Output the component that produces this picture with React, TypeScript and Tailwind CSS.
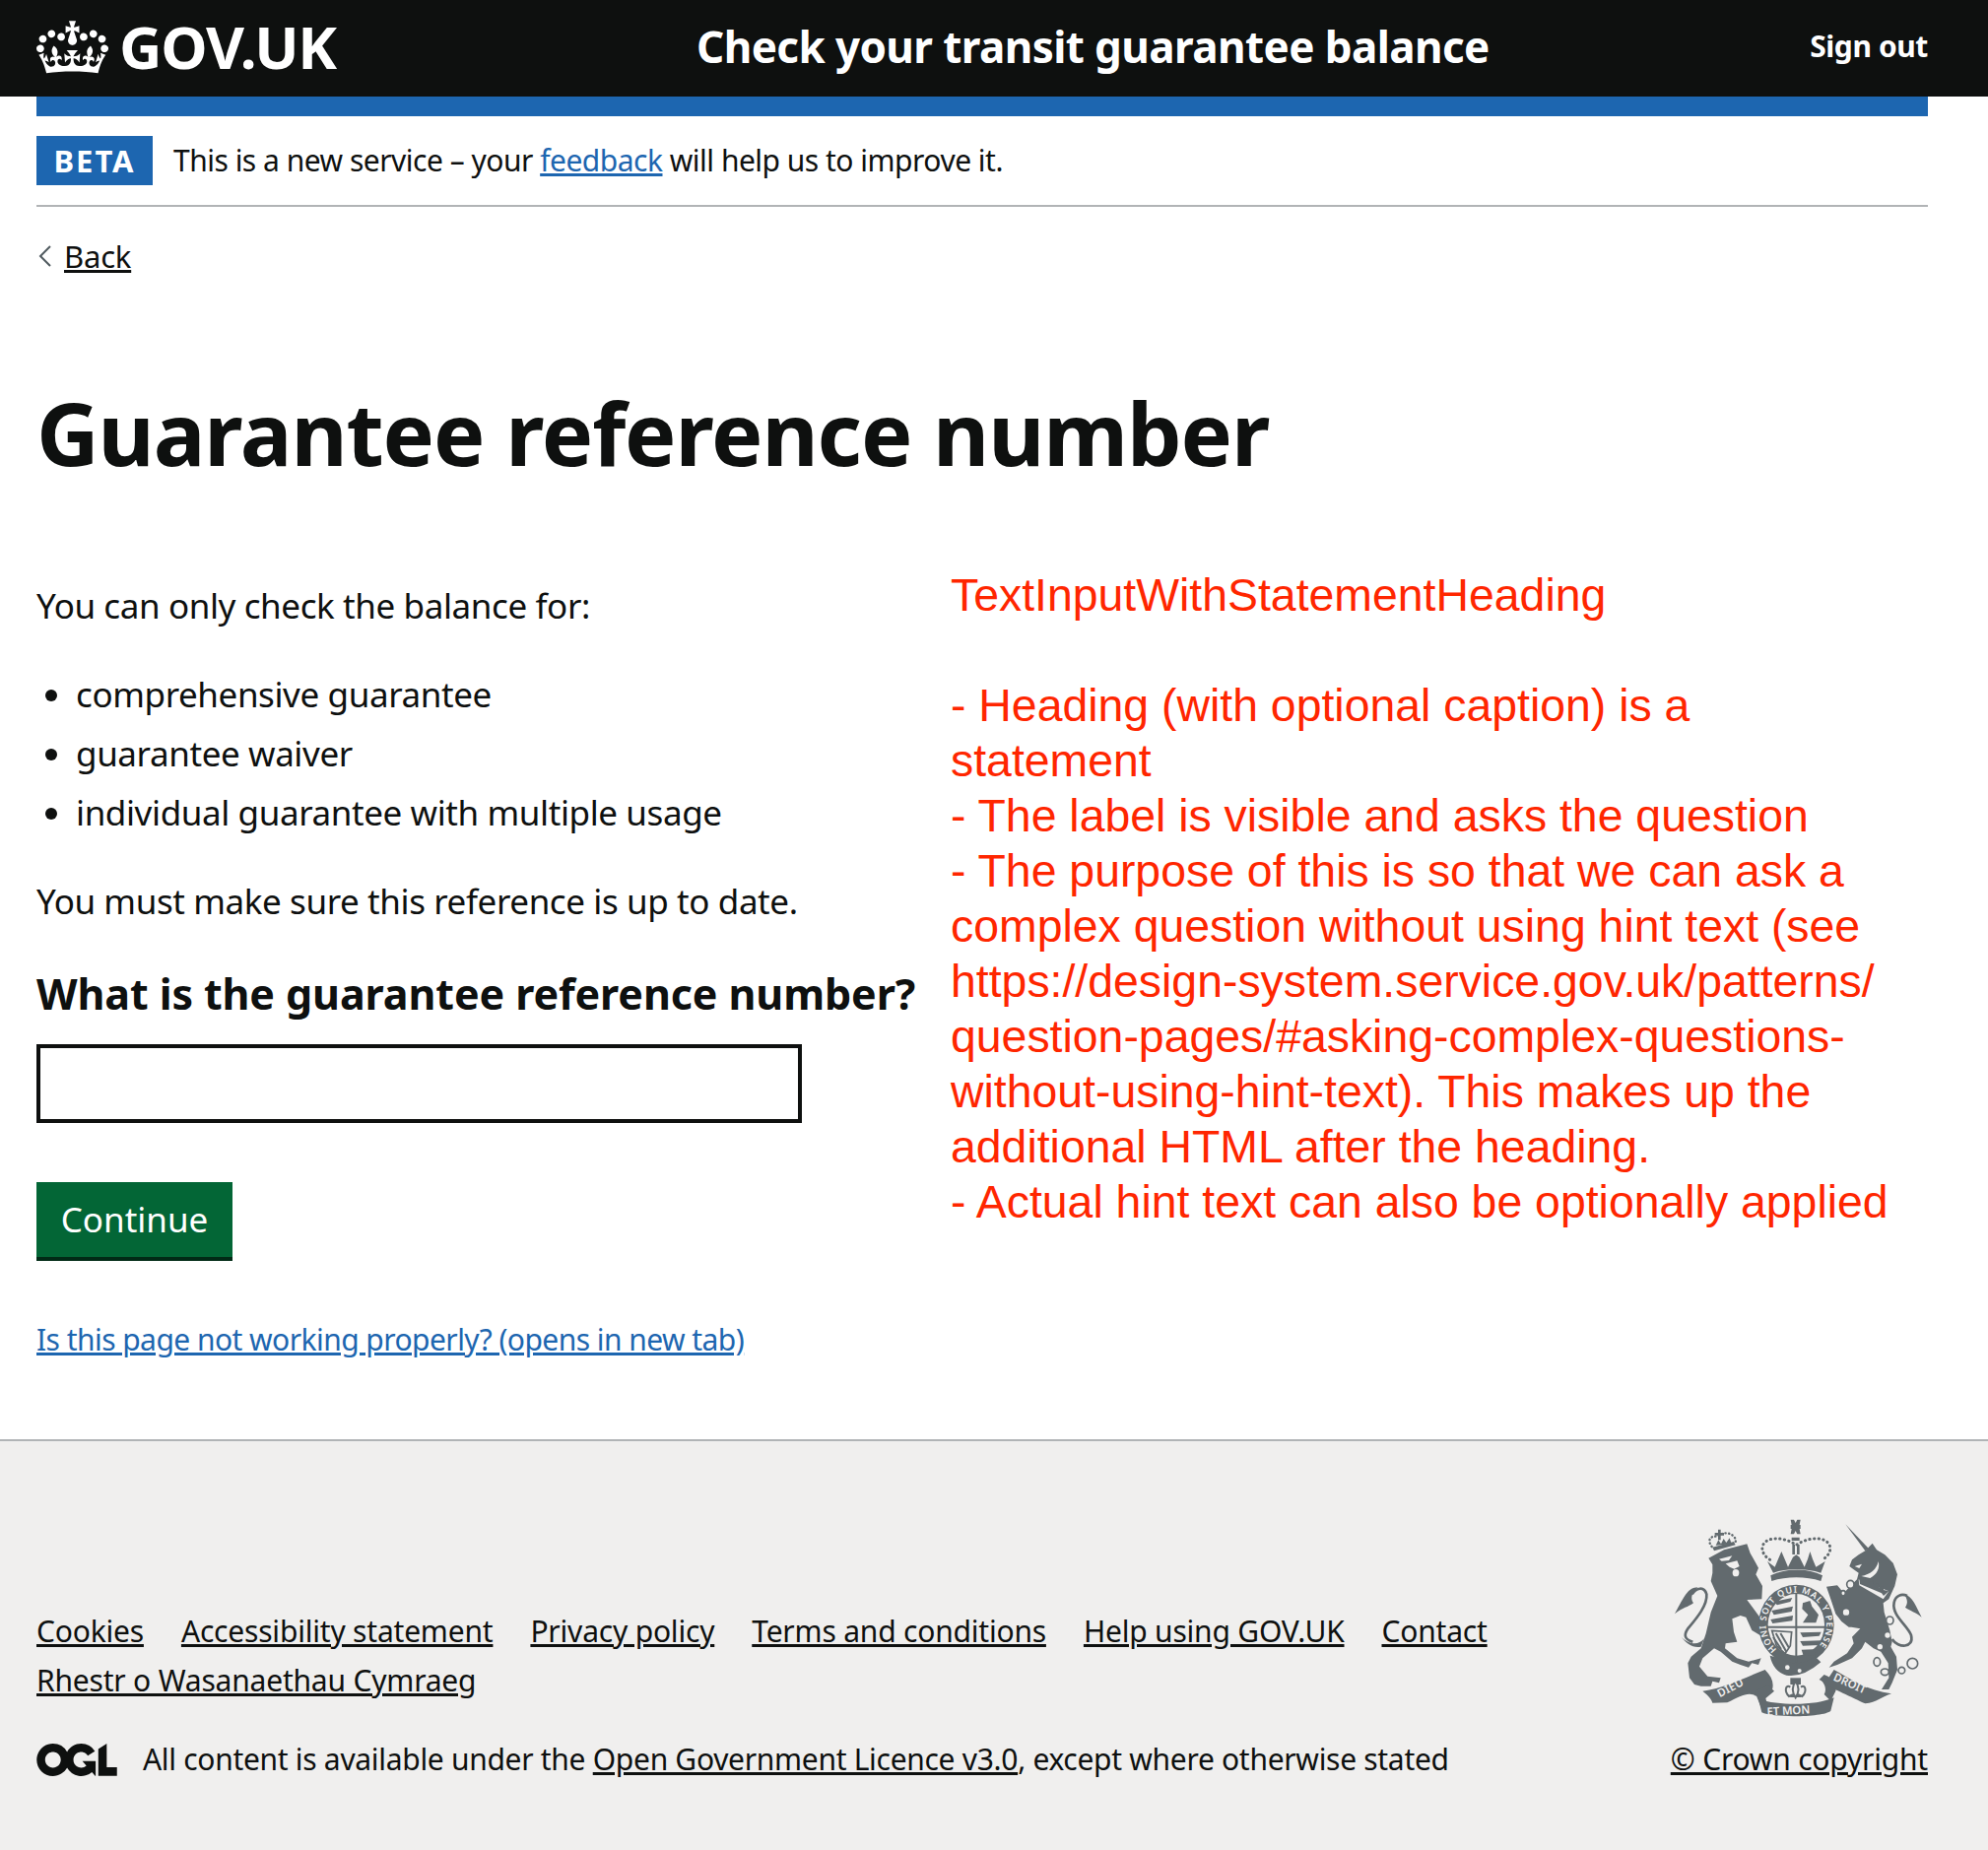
const CROWN =
  "M25 30.2c3.5 1.5 7.7-.2 9.1-3.7 1.5-3.6-.2-7.8-3.9-9.2-3.6-1.4-7.6.3-9.1 3.9-1.4 3.5.3 7.5 3.9 9zM9 39.5c3.6 1.5 7.8-.2 9.2-3.7 1.5-3.6-.2-7.8-3.9-9.1-3.6-1.5-7.6.2-9.1 3.8-1.4 3.5.3 7.5 3.8 9zM4.4 57.2c3.5 1.5 7.7-.2 9.1-3.8 1.5-3.6-.2-7.7-3.9-9.1-3.5-1.5-7.6.3-9.1 3.8-1.4 3.5.3 7.6 3.9 9.1zm38.3-21.4c3.5 1.5 7.7-.2 9.1-3.8 1.5-3.6-.2-7.7-3.9-9.1-3.6-1.5-7.6.3-9.1 3.8-1.3 3.6.4 7.7 3.9 9.1zm64.4-5.6c-3.6 1.5-7.8-.2-9.1-3.7-1.5-3.6.2-7.8 3.8-9.2 3.6-1.4 7.7.3 9.2 3.9 1.3 3.5-.4 7.5-3.9 9zm15.9 9.3c-3.6 1.5-7.7-.2-9.1-3.7-1.5-3.6.2-7.8 3.7-9.1 3.6-1.5 7.7.2 9.2 3.8 1.5 3.5-.3 7.5-3.8 9zm4.7 17.7c-3.6 1.5-7.8-.2-9.2-3.8-1.5-3.6.2-7.7 3.9-9.1 3.6-1.5 7.7.3 9.2 3.8 1.3 3.5-.4 7.6-3.9 9.1zM89.3 35.8c-3.6 1.5-7.8-.2-9.2-3.8-1.4-3.6.2-7.7 3.9-9.1 3.6-1.5 7.7.3 9.2 3.8 1.4 3.6-.3 7.7-3.9 9.1zM69.7 17.7l8.9 4.7V9.3l-8.9 2.8c-.2-.3-.5-.6-.9-.9L72.4 0H59.6l3.6 11.2c-.3.3-.6.5-.9.9l-8.8-2.8v13.1l8.8-4.7c.3.3.6.7.9.9l-5 15.4v.1c-.2.8-.4 1.6-.4 2.4 0 4.1 3.1 7.5 7 8.1h.2c.3 0 .7.1 1 .1.4 0 .7 0 1-.1h.2c4-.6 7.1-4.1 7.1-8.1 0-.8-.1-1.7-.4-2.4V34l-5.1-15.4c.4-.2.7-.6 1-.9zM66 92.8c16.9 0 32.8 1.1 47.1 3.2 4-16.9 8.9-26.7 14-33.5l-9.6-3.4c1 4.9 1.1 7.2 0 10.2-1.5-1.4-3-4.3-4.2-8.7L108.6 76c2.8-2 5-3.2 7.5-3.3-4.4 9.4-10 11.9-13.6 11.2-4.3-.8-6.3-4.6-5.6-7.9 1-4.7 5.7-5.9 8-.5 4.3-8.7-3-11.4-7.6-8.8 7.1-7.2 7.9-13.5 2.1-21.1-8 6.1-8.1 12.3-4.5 20.8-4.7-5.4-12.1-2.5-9.5 6.2 3.4-5.2 7.9-2 7.2 3.1-.6 4.3-6.4 7.8-13.5 7.2-10.3-.9-10.9-8-11.2-13.8 2.5-.5 7.1 1.8 11 7.3L80.2 60c-4.1 4.4-8 5.3-12.3 5.4 1.4-4.4 8-11.6 8-11.6H55.5s6.4 7.2 7.9 11.6c-4.2-.1-8-1-12.3-5.4l1.4 16.4c3.9-5.5 8.5-7.7 10.9-7.3-.3 5.8-.9 12.8-11.1 13.8-7.2.6-12.9-2.9-13.5-7.2-.7-5 3.8-8.3 7.1-3.1 2.7-8.7-4.6-11.6-9.4-6.2 3.7-8.5 3.6-14.7-4.6-20.8-5.8 7.6-5 13.9 2.2 21.1-4.7-2.6-11.9.1-7.7 8.8 2.3-5.5 7.1-4.2 8.1.5.7 3.3-1.3 7.1-5.7 7.9-3.5.7-9-1.8-13.5-11.2 2.5.1 4.7 1.3 7.5 3.3l-4.7-15.4c-1.2 4.4-2.7 7.2-4.3 8.7-1.1-3-.9-5.3 0-10.2l-9.5 3.4c5 6.9 9.9 16.7 14 33.5 14.8-2.1 30.8-3.2 47.7-3.2z";

const OGL =
  "M421.5 142.8V.1l-50.7 32.3v161.1h112.4v-50.7zm-122.3-9.6A47.12 47.12 0 0 1 221 97.8c0-26 21.1-47.1 47.1-47.1 16.7 0 31.4 8.7 39.7 21.8l42.7-27.2A97.63 97.63 0 0 0 268.1 0c-36.5 0-68.3 20.1-85.1 49.7A98 98 0 0 0 97.8 0C43.9 0 0 43.9 0 97.8s43.9 97.8 97.8 97.8c36.5 0 68.3-20.1 85.1-49.7a97.76 97.76 0 0 0 149.6 25.4l19.4 22.2h3v-87.8h-80l24.3 27.5zM97.8 145c-26 0-47.1-21.1-47.1-47.1s21.1-47.1 47.1-47.1 47.2 21 47.2 47S123.8 145 97.8 145";

const FOOTER_LINKS = [
  "Cookies",
  "Accessibility statement",
  "Privacy policy",
  "Terms and conditions",
  "Help using GOV.UK",
  "Contact",
  "Rhestr o Wasanaethau Cymraeg",
];

const NOTES = [
  "TextInputWithStatementHeading",
  "",
  "- Heading (with optional caption) is a statement",
  "- The label is visible and asks the question",
  "- The purpose of this is so that we can ask a complex question without using hint text (see https://design-system.service.gov.uk/patterns/ question-pages/#asking-complex-questions-without-using-hint-text). This makes up the additional HTML after the heading.",
  "- Actual hint text can also be optionally applied",
];

// Royal arms. Coordinates are 3x page pixels, three groups to match the three crops I traced
function RoyalArms() {
  const dark = "#626a6e";
  const light = "#f0efee";
  const font = "'Noto Sans',sans-serif";
  return (
    <svg viewBox="0 0 786 645" className="w-[262px] h-[215px]" fill={dark}>
      {/* lion */}
      <path d="M118 125L165 100L235 82L245 110L262 140L270 155L262 175L282 210L280 250L235 252L285 320L302 345L312 370L288 376L275 360L250 345L232 305L215 300L190 310L195 350L205 380L170 385L168 400L205 430L240 440L278 430L270 450L250 445L240 458L215 450L190 440L155 410L135 400L100 430L90 455L115 485L155 490L150 505L130 500L125 515L95 515L75 510L60 490L55 445L65 425L95 400L110 355L125 290L145 240L125 195L130 170L130 145z" />
      <path d="M150 128L190 118L180 132L158 134zM170 142L205 133L212 150L196 158L182 152z" fill={light} />
      <ellipse cx="201" cy="170" rx="10" ry="11" fill={light} />
      <path d="M70 380C40 372 45 355 55 340C80 310 115 270 112 235C105 210 80 215 68 235" fill="none" stroke={dark} strokeWidth="8" />
      <path d="M85 214C55 215 45 240 15 295C40 275 55 275 72 262C60 245 70 230 85 214z" />
      <path d="M35 365C55 385 85 395 105 370L95 395C70 400 50 385 35 365z" />
      <path d="M130 92L195 75L200 85L135 103z" />
      <path d="M128 90C112 70 125 55 145 60C160 45 185 45 197 62C205 72 198 80 195 80" fill="none" stroke={dark} strokeWidth="7" strokeLinecap="round" strokeDasharray="1 10" />
      <path d="M147 38h8v10h10v8h-10v14h-8v-14h-10v-8h10z" />
      <path d="M140 86l8-16 8 12 8-16 8 12 10-14 6 18z" />

      <g transform="translate(255 0)">
        {/* crown */}
        <path d="M50 130C25 115 15 85 45 70C70 60 105 68 130 85C155 68 190 60 215 70C245 85 235 115 210 130" fill="none" stroke={dark} strokeWidth="9" strokeLinecap="round" strokeDasharray="1 13" />
        <path d="M113 8h10l5 10 5-10h10l-3 16 3 0 0 12-3 0 3 16h-10l-5-10-5 10h-10l3-16-3 0 0-12 3 0z" />
        <path d="M116 62h24v10h-24zM118 84h8v30h-8zM132 84h8v30h-8z" />
        <path d="M42 135L65 152L75 128L85 105L95 128L105 152L120 122L130 115L140 122L155 152L165 128L172 105L180 128L190 152L218 135L205 170C160 155 100 155 60 170z" />
        <path d="M55 195L52 178C100 155 165 155 210 178L205 195C160 180 100 180 55 195z" />

        {/* garter and shield */}
        <ellipse cx="130" cy="328" rx="115" ry="122" />
        <path id="garter-arc" d="M71 403A92 98 0 1 1 189 403" fill="none" />
        <text fontFamily={font} fontWeight="600" fontSize="27" fill={light}>
          <textPath href="#garter-arc" textLength="450" lengthAdjust="spacing" startOffset="0">HONI SOIT QUI MAL Y PENSE</textPath>
        </text>
        <ellipse cx="130" cy="328" rx="86" ry="94" fill={light} />
        <path d="M127 232h6v210h-6zM42 332h176v6h-176z" />
        <path d="M60 258L118 246L112 258L72 268zM55 285L120 272L116 288L62 298zM52 312L120 300L118 316L58 324z" />
        <path d="M150 262L172 255L178 272L198 298L190 322L150 322L166 298L148 280z" />
        <path d="M142 352L206 350L200 362L150 366zM142 378L206 376L200 390L150 392zM146 404L198 402L184 420L152 422z" />
        <path d="M56 346L116 350L112 392L96 416L70 392z" fill="none" stroke={dark} strokeWidth="5" />
        <path d="M68 354L100 410M82 354L108 398M60 366L84 402" stroke={dark} strokeWidth="6" />
        <path d="M50 422L78 430Q130 462 188 425L205 442Q150 490 100 482Q60 470 50 422z" />
        <circle cx="103" cy="458" r="7" fill={light} />
        <circle cx="140" cy="468" r="6" fill={light} />

        {/* fleur de lys */}
        <path d="M112 490h32v20h-32z" />
        <path d="M128 500C114 520 118 535 128 550C138 535 142 520 128 500zM112 518C98 508 92 530 108 546L122 540M144 518C158 508 164 530 148 546L134 540M112 546H144" fill={light} stroke={dark} strokeWidth="6" />
      </g>

      {/* ribbons */}
      <path d="M100 530C170 520 225 490 290 465C310 485 318 505 312 525L262 545C240 530 215 545 175 565L130 566C125 550 112 540 100 530z" />
      <path d="M258 530L300 512L318 530L292 552L300 585L275 572z" />
      <path d="M270 555C335 575 445 575 500 550L490 590C470 610 315 612 280 595z" />
      <path d="M470 480C500 490 510 515 505 530L490 560L470 540C480 525 470 500 455 495z" />
      <path d="M500 465C545 490 605 530 675 538C645 548 630 565 595 568C555 550 495 520 470 510z" />
      <text x="152" y="550" transform="rotate(-28 152 550)" fontFamily={font} fontWeight="600" fontSize="34" fill={light} letterSpacing="1">DIEU</text>
      <text x="296" y="605" transform="rotate(-3 296 605)" fontFamily={font} fontWeight="600" fontSize="34" fill={light}>ET MON</text>
      <text x="496" y="496" transform="rotate(24 496 496)" fontFamily={font} fontWeight="600" fontSize="34" fill={light}>DROIT</text>

      <g transform="translate(405 0)">
        {/* unicorn */}
        <path d="M130 22L200 95L190 103z" />
        <path d="M190 103L212 80L225 100L250 115L275 140L288 175L280 210L262 250L245 262L248 290L265 345L272 380L268 395L285 425L288 465L272 505L262 525L240 525L262 490L260 445L238 410L215 400L190 380L180 400L150 430L105 450L80 458L95 440L135 415L155 385L150 365L175 340L148 335L140 335L118 318L100 295L85 250L72 212L105 208L125 232L140 215L165 190L170 170L155 160L142 150L150 130L170 115z" />
        <path d="M230 135C225 160 205 175 178 180L205 186C225 176 236 155 230 135zM158 150L180 143L172 156z" fill={light} />
        <path d="M170 190L262 226L245 250L172 208z" fill={light} />
        <path d="M172 190L180 180L185 192L198 186L201 198L214 194L216 206L230 202L232 214L246 210L246 222L262 226L246 240L240 232L174 204z" />
        <path d="M272 372C290 400 340 400 330 360C320 330 270 300 278 260C282 240 300 232 318 240" fill="none" stroke={dark} strokeWidth="8" />
        <path d="M308 234C335 240 345 275 362 305C345 290 325 285 312 275C322 262 318 248 308 234z" />
        <g fill={light} stroke={dark} strokeWidth="5">
          <ellipse cx="145" cy="205" rx="11" ry="12" />
          <ellipse cx="123" cy="232" rx="7" ry="8" />
          <ellipse cx="132" cy="290" rx="12" ry="12" />
          <ellipse cx="265" cy="315" rx="11" ry="12" />
        </g>
        <circle cx="258" cy="360" r="8" fill={light} />
        <circle cx="235" cy="395" r="8" fill={light} />
        <g fill="none" stroke={dark} strokeWidth="5">
          <ellipse cx="226" cy="441" rx="10" ry="13" />
          <ellipse cx="250" cy="472" rx="12" ry="10" />
          <circle cx="301" cy="467" r="10" />
          <circle cx="334" cy="446" r="16" />
        </g>
      </g>
    </svg>
  );
}

export default function App() {
  return (
    <div className="min-h-[1878px] flex flex-col bg-white text-[#0e100f] font-['Noto_Sans',sans-serif] text-[35px] tracking-[-0.4px] leading-[50px]">
      <header className="h-[98px] shrink-0 bg-[#0e100f] text-white flex items-center pl-[37px] pr-[61px]">
        <div className="w-[670px] flex items-center gap-[11px]">
          <svg viewBox="0 0 132 97" className="w-[73px] h-[54px] -mt-[2px]" fill="currentColor">
            <path fillRule="evenodd" d={CROWN} />
          </svg>
          <span className="text-[60px] font-bold tracking-[-1.2px] -mt-[5px]">GOV.UK</span>
        </div>
        <div className="text-[44px] font-bold flex-1 tracking-[-0.6px] -mt-[4px]">Check your transit guarantee balance</div>
        <a className="text-[30px] font-bold tracking-[-0.4px] -mt-[4px]">Sign out</a>
      </header>

      <main className="flex-1 px-[37px] pr-[61px]">
        <div className="h-[20px] bg-[#1d66b0]" />
        <div className="h-[92px] border-b-2 border-[#b1b4b6] flex items-center gap-[21px]">
          <span className="w-[118px] h-[50px] bg-[#1d66b0] text-white text-[31px] font-bold tracking-[2px] flex items-center justify-center">BETA</span>
          <p className="text-[30px] tracking-[-0.5px]">
            This is a new service – your <a className="text-[#1d66b0] underline">feedback</a> will help us to improve it.
          </p>
        </div>

        <div className="mt-[25px] flex items-center gap-[12px] text-[31px] tracking-[-0.2px] leading-[50px]">
          <svg viewBox="0 0 14 24" className="ml-[2px] w-[14px] h-[24px]" fill="none" stroke="#505a5f" strokeWidth="2">
            <path d="M12 2L2 12l10 10" />
          </svg>
          <a className="underline">Back</a>
        </div>

        <h1 className="mt-[94px] text-[88px] leading-[120px] font-bold tracking-[-1.1px]">Guarantee reference number</h1>

        <div className="mt-[70px] flex">
          <div className="w-[928px] shrink-0">
            <p className="mt-[21px]">You can only check the balance for:</p>
            <ul className="mt-[40px] flex flex-col gap-[10px] list-disc pl-[40px]">
              <li>comprehensive guarantee</li>
              <li>guarantee waiver</li>
              <li>individual guarantee with multiple usage</li>
            </ul>
            <p className="mt-[40px]">You must make sure this reference is up to date.</p>
            <label className="block mt-[39px] text-[43px] tracking-[-0.1px] font-bold leading-[60px] whitespace-nowrap">What is the guarantee reference number?</label>
            <input className="block mt-[21px] w-[777px] h-[80px] border-4 border-[#0e100f] bg-white" />
            <button className="block mt-[60px] w-[199px] h-[80px] bg-[#036636] border-b-4 border-[#012a16] text-white text-[35px] tracking-normal">Continue</button>
            <a className="block mt-[55px] text-[30px] tracking-[-0.55px] text-[#1d66b0] underline">Is this page not working properly? (opens in new tab)</a>
          </div>
          <div className="w-[955px] pt-[7px] tracking-normal text-[#ff2600] font-['Liberation_Sans',sans-serif] text-[46.4px] leading-[56px]">
            {NOTES.map((note, i) => (
              <p key={i} className="min-h-[56px]">{note}</p>
            ))}
          </div>
        </div>
      </main>

      <footer className="h-[417px] shrink-0 bg-[#f0efee] border-t-2 border-[#b1b4b6] px-[37px] pr-[61px] flex items-end pb-[67px] text-[30px] tracking-[-0.2px]">
        <div className="flex-1">
          <ul className="flex flex-wrap w-[1540px] gap-x-[38px]">
            {FOOTER_LINKS.map((link) => (
              <li key={link}><a className="underline">{link}</a></li>
            ))}
          </ul>
          <div className="mt-[30px] flex items-center gap-[26px]">
            <svg viewBox="0 0 483.2 195.7" className="w-[82px] h-[33px]" fill="currentColor">
              <path d={OGL} />
            </svg>
            <span className="tracking-[-0.3px]">All content is available under the <a className="underline">Open Government Licence v3.0</a>, except where otherwise stated</span>
          </div>
        </div>
        <div className="flex flex-col items-end gap-[6px]">
          <RoyalArms />
          <a className="underline">© Crown copyright</a>
        </div>
      </footer>
    </div>
  );
}
